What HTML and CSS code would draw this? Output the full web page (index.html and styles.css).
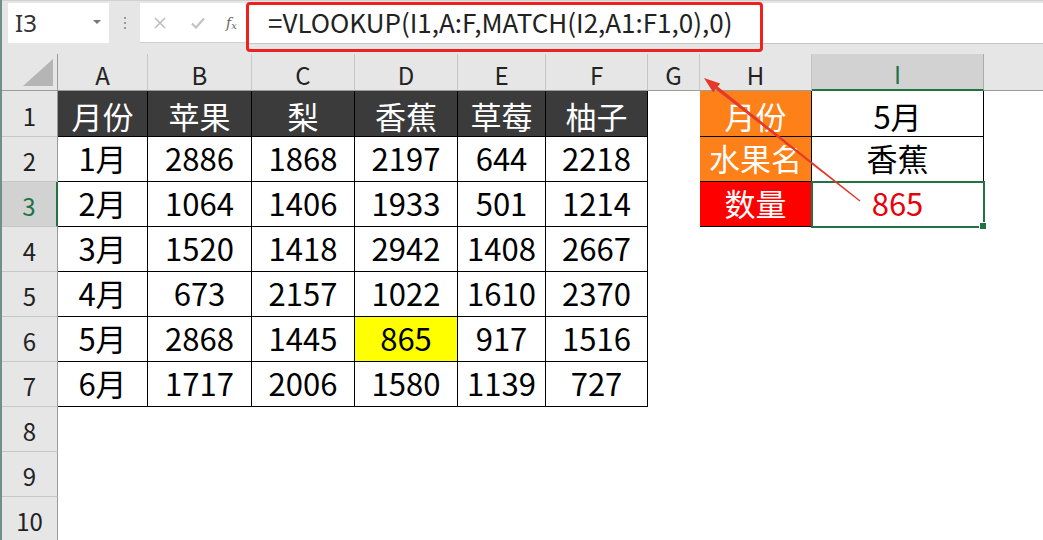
FILE: index.html
```html
<!DOCTYPE html>
<html lang="zh-CN">
<head>
<meta charset="utf-8">
<title>VLOOKUP MATCH</title>
<link rel="stylesheet" href="styles.css">
</head>
<body>
<div class="app">
  <div class="topbar">
    <div class="namebox"><span class="nb-text">I3</span><span class="nb-arrow"></span></div>
    <div class="sep"><i></i><i></i><i></i></div>
    <div class="fbtns">
      <svg class="ico" width="12" height="12" viewBox="0 0 12 12"><path d="M1 1L11 11M11 1L1 11" stroke="#bdbdbd" stroke-width="1.6" fill="none"/></svg>
      <svg class="ico" width="14" height="12" viewBox="0 0 14 12"><path d="M1 6.5L5 10.5L13 1.5" stroke="#c3c3c3" stroke-width="2.2" fill="none"/></svg>
      <span class="fx">f<sub>x</sub></span>
    </div>
    <div class="finput">=VLOOKUP(I1,A:F,MATCH(I2,A1:F1,0),0)</div>
  </div>
  <div class="sheet">
    <!-- header row -->
    <div class="corner"><span class="tri"></span></div>
    <div class="ch">A</div><div class="ch">B</div><div class="ch">C</div><div class="ch">D</div><div class="ch">E</div><div class="ch">F</div><div class="ch">G</div><div class="ch">H</div><div class="ch sel">I</div><div class="ch last"></div>
    <!-- row 1 -->
    <div class="rh">1</div>
    <div class="c r1 t th">月份</div><div class="c r1 t th">苹果</div><div class="c r1 t th">梨</div><div class="c r1 t th">香蕉</div><div class="c r1 t th">草莓</div><div class="c r1 t th">柚子</div>
    <div class="c r1"></div><div class="c r1 t or">月份</div><div class="c r1 t">5月</div><div class="c r1"></div>
    <!-- row 2 -->
    <div class="rh">2</div>
    <div class="c t">1月</div><div class="c t">2886</div><div class="c t">1868</div><div class="c t">2197</div><div class="c t">644</div><div class="c t">2218</div>
    <div class="c"></div><div class="c t or">水果名</div><div class="c t">香蕉</div><div class="c"></div>
    <!-- row 3 -->
    <div class="rh sel">3</div>
    <div class="c t">2月</div><div class="c t">1064</div><div class="c t">1406</div><div class="c t">1933</div><div class="c t">501</div><div class="c t">1214</div>
    <div class="c"></div><div class="c t rd">数量</div><div class="c t active redtxt">865</div><div class="c"></div>
    <!-- row 4 -->
    <div class="rh">4</div>
    <div class="c t">3月</div><div class="c t">1520</div><div class="c t">1418</div><div class="c t">2942</div><div class="c t">1408</div><div class="c t">2667</div>
    <div class="c"></div><div class="c"></div><div class="c"></div><div class="c"></div>
    <!-- row 5 -->
    <div class="rh">5</div>
    <div class="c t">4月</div><div class="c t">673</div><div class="c t">2157</div><div class="c t">1022</div><div class="c t">1610</div><div class="c t">2370</div>
    <div class="c"></div><div class="c"></div><div class="c"></div><div class="c"></div>
    <!-- row 6 -->
    <div class="rh">6</div>
    <div class="c t">5月</div><div class="c t">2868</div><div class="c t">1445</div><div class="c t hl">865</div><div class="c t">917</div><div class="c t">1516</div>
    <div class="c"></div><div class="c"></div><div class="c"></div><div class="c"></div>
    <!-- row 7 -->
    <div class="rh">7</div>
    <div class="c t">6月</div><div class="c t">1717</div><div class="c t">2006</div><div class="c t">1580</div><div class="c t">1139</div><div class="c t">727</div>
    <div class="c"></div><div class="c"></div><div class="c"></div><div class="c"></div>
    <!-- row 8 -->
    <div class="rh">8</div>
    <div class="c"></div><div class="c"></div><div class="c"></div><div class="c"></div><div class="c"></div><div class="c"></div><div class="c"></div><div class="c"></div><div class="c"></div><div class="c"></div>
    <!-- row 9 -->
    <div class="rh">9</div>
    <div class="c"></div><div class="c"></div><div class="c"></div><div class="c"></div><div class="c"></div><div class="c"></div><div class="c"></div><div class="c"></div><div class="c"></div><div class="c"></div>
    <!-- row 10 -->
    <div class="rh">10</div>
    <div class="c"></div><div class="c"></div><div class="c"></div><div class="c"></div><div class="c"></div><div class="c"></div><div class="c"></div><div class="c"></div><div class="c"></div><div class="c"></div>
  </div>
  <div class="callout"></div>
  <svg class="arrow" width="1043" height="540" viewBox="0 0 1043 540">
    <polygon points="715.6,89.3 717.6,86.5 860.4,200.6 859.6,201.4" fill="#e5382a"/>
    <polygon points="704,78 720.2,83.4 713.2,92.4" fill="#e5382a"/>
  </svg>
</div>
</body>
</html>
```

FILE: styles.css
```css
* { box-sizing: border-box; }
html, body { margin: 0; padding: 0; }
body {
  width: 1043px;
  height: 540px;
  overflow: hidden;
  background: #fff;
  font-family: "Noto Sans CJK SC", "Noto Sans", sans-serif;
}
.app {
  position: relative;
  width: 1043px;
  height: 540px;
  overflow: hidden;
  background: #e6e6e6;
  border-left: 2px solid #6f8f88;
}
.topbar {
  height: 54px;
  display: flex;
  align-items: flex-start;
  padding-top: 2px;
  border-top: 1px solid #d0d0d0;
}
.namebox {
  margin-left: 6px;
  width: 101px;
  height: 40px;
  background: #fff;
  display: flex;
  align-items: center;
  justify-content: space-between;
  padding: 0 8px 0 7px;
}
.nb-text {
  font-size: 24px;
  color: #333;
  font-family: "Noto Sans", "Noto Sans CJK SC", sans-serif;
  margin-top: -1px;
}
.nb-arrow {
  width: 0;
  height: 0;
  border-left: 4px solid transparent;
  border-right: 4px solid transparent;
  border-top: 4px solid #777;
  margin-top: -2px;
}
.sep {
  width: 31px;
  height: 40px;
  display: flex;
  flex-direction: column;
  align-items: center;
  justify-content: center;
  gap: 3px;
}
.sep i {
  display: block;
  width: 2px;
  height: 2px;
  background: #9a9a9a;
}
.fbtns {
  width: 108px;
  height: 40px;
  background: #fff;
  display: flex;
  align-items: center;
  padding-left: 14px;
  gap: 25px;
  border-bottom: 1px solid #d0d0d0;
}
.fx {
  font-family: "DejaVu Serif", "Liberation Serif", serif;
  font-style: italic;
  font-size: 14px;
  color: #666;
  margin-left: -4px;
}
.fx sub {
  font-size: 10px;
  vertical-align: -1px;
}
.finput {
  flex: 1;
  height: 41px;
  background: #fff;
  border-bottom: 1px solid #c6c6c6;
  font-size: 26px;
  color: #222;
  padding-left: 20px;
  line-height: 38px;
  white-space: nowrap;
}
.sheet {
  display: grid;
  grid-template-columns: 56px 90px 104px 103px 103px 88px 102px 52px 112px 172px 59px;
  grid-template-rows: 37px 46px repeat(9, 45px);
  background: #fff;
}
.corner {
  position: relative;
  background: #e6e6e6;
  border-right: 1px solid #9b9b9b;
  border-bottom: 1px solid #9b9b9b;
}
.tri {
  position: absolute;
  right: 4px;
  bottom: 4px;
  width: 0;
  height: 0;
  border-left: 30px solid transparent;
  border-bottom: 27px solid #b5b5b5;
}
.ch {
  background: #e6e6e6;
  border-right: 1px solid #c6c6c6;
  border-bottom: 1px solid #9b9b9b;
  font-size: 24px;
  color: #222;
  display: flex;
  align-items: center;
  justify-content: center;
  padding-top: 4px;
}
.ch.last { border-right: none; }
.ch.sel {
  background: #d2d2d2;
  color: #217346;
  border-bottom: 2px solid #217346;
  border-right: 1px solid #aaa;
}
.rh {
  background: #e6e6e6;
  border-right: 1px solid #9b9b9b;
  border-bottom: 1px solid #c6c6c6;
  font-size: 24px;
  color: #222;
  display: flex;
  align-items: center;
  justify-content: center;
  padding-top: 3px;
}
.rh.sel {
  background: #d2d2d2;
  color: #217346;
  border-right: 2px solid #217346;
}
.c {
  background: #fff;
  font-size: 31px;
  color: #000;
  display: flex;
  align-items: center;
  justify-content: center;
  white-space: nowrap;
  padding-bottom: 3px;
}
.c.r1 { padding-bottom: 0; padding-top: 3px; }
.t {
  border-right: 1px solid #000;
  border-bottom: 1px solid #000;
}
.th { background: #3b3b3b; color: #fff; }
.or { background: #fd8019; color: #fff; }
.rd { background: #ff0000; color: #fff; }
.hl { background: #ffff00; }
.redtxt { color: #e8000b; }
.active {
  position: relative;
  outline: 2px solid #217346;
  outline-offset: -1px;
}
.active::after {
  content: "";
  position: absolute;
  right: -4px;
  bottom: -4px;
  width: 6px;
  height: 6px;
  background: #217346;
  border: 1px solid #fff;
}
.callout {
  position: absolute;
  left: 244px;
  top: 2px;
  width: 517px;
  height: 50px;
  border: 3px solid #ee2020;
  border-radius: 4px;
}
.arrow {
  position: absolute;
  left: -2px;
  top: 0;
  pointer-events: none;
}
```
